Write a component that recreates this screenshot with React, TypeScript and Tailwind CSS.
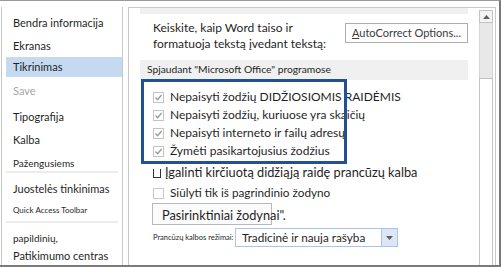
import React from 'react';

const font = { fontFamily: 'Lato, "Noto Sans", "Liberation Sans", sans-serif' };

const CheckMark = () => (
  <svg width="9" height="9" viewBox="0 0 9 9" className="block">
    <path d="M1.5 4.6 L3.6 6.7 L7.6 2" fill="none" stroke="#9b9b9b" strokeWidth="1.4" />
  </svg>
);

const GreyCheck = () => (
  <span className="flex h-[11px] w-[11px] shrink-0 items-center justify-center border border-[#c4c4c4] bg-white">
    <CheckMark />
  </span>
);

const rules = [
  'Nepaisyti žodžių DIDŽIOSIOMIS RAIDĖMIS',
  'Nepaisyti žodžių, kuriuose yra skaičių',
  'Nepaisyti interneto ir failų adresų',
  'Žymėti pasikartojusius žodžius',
];

const Sidebar: React.FC = () => (
  <div className="ml-[1px] flex w-[122px] shrink-0 flex-col whitespace-nowrap border-x border-[#c8c8c8] pt-[5px] text-[11px] leading-[14px] text-[#1f1f1f]">
    <div className="flex h-[22px] items-center pl-[11px]">Bendra informacija</div>
    <div className="flex h-[24px] items-center pl-[11px]">Ekranas</div>
    <div className="ml-[4px] flex h-[20px] items-center bg-[#c5d9f1] pl-[7px]">Tikrinimas</div>
    <div className="flex h-[27px] items-center pl-[11px] text-[#a6a6a6]">Save</div>
    <div className="flex h-[26px] items-center pl-[11px]">Tipografija</div>
    <div className="flex h-[21px] items-center pl-[11px]">Kalba</div>
    <div className="flex h-[21px] items-center pl-[11px] pt-[4px] text-[10px]">Pažengusiems</div>
    <div className="mx-[4px] h-[2px] bg-[#ececec]" />
    <div className="mt-[5px] flex h-[22px] items-center pl-[11px]">Juostelės tinkinimas</div>
    <div className="flex h-[20px] items-center pl-[11px] text-[8px]">Quick Access Toolbar</div>
    <div className="mx-[4px] mt-[2px] h-[2px] bg-[#ececec]" />
    <div className="mt-[6px] flex h-[18px] items-center pl-[11px] text-[10px]">papildinių,</div>
    <div className="flex h-[18px] items-center pl-[11px]">Patikimumo centras</div>
  </div>
);

const ScrollBar: React.FC = () => (
  <div className="mr-[2px] flex w-[14px] shrink-0 flex-col pt-[2px]">
    <div className="flex h-[13px] items-center justify-center border border-[#c4c4c4] bg-[#f4f4f4]">
      <svg width="7" height="4" viewBox="0 0 7 4" className="block">
        <path d="M0 4 L3.5 0 L7 4 Z" fill="#606060" />
      </svg>
    </div>
    <div className="h-[55px] border-x border-[#d6d6d6] bg-[#e8e8e8]" />
    <div className="flex-1 border-x border-t border-[#c4c4c4] bg-white" />
  </div>
);

const Content: React.FC = () => (
  <div className="flex w-[368px] shrink-0 border-x border-t border-[#c8c8c8] text-[#1f1f1f]">
    <div className="flex w-[350px] shrink-0 flex-col whitespace-nowrap">
      <div className="mx-[11px] h-[6px] bg-[#f0f0f0]" />
      <div className="mt-[6px] flex items-start justify-between pl-[24px] pr-[11px]">
        <div className="text-[12px] leading-[16px]">
          <div>Keiskite, kaip Word taiso ir</div>
          <div>formatuoja tekstą įvedant tekstą:</div>
        </div>
        <div className="mt-[3px] flex h-[20px] w-[123px] items-center justify-center border border-[#adadad] bg-[#fdfdfd] text-[11px] text-[#3c3c3c]">
          <span><span className="underline">A</span>utoCorrect Options...</span>
        </div>
      </div>
      <div className="mx-[11px] mt-[8px] flex h-[20px] items-center bg-[#f0f0f0] pl-[7px] text-[10.25px]">
        Spjaudant "Microsoft Office" programose
      </div>
      <div className="mt-[8px] flex flex-col pl-[24px] text-[12px]">
        {rules.map((r) => (
          <div key={r} className="flex h-[18px] items-center gap-[6px]">
            <GreyCheck />
            <span>{r}</span>
          </div>
        ))}
        <div className="mt-[4px] flex h-[18px] items-center text-[12.75px]">
          <span className="mr-[4px] h-[9px] w-[8px] border-x border-b border-[#333]" />
          <span>Įgalinti kirčiuotą didžiąją raidę prancūzų kalba</span>
        </div>
        <div className="mt-[1px] flex h-[20px] items-center gap-[6px] text-[11.75px]">
          <span className="h-[11px] w-[11px] border border-[#c8c8c8] bg-white" />
          <span>Siūlyti tik iš pagrindinio žodyno</span>
        </div>
      </div>
      <div className="ml-[23px] flex h-[22px] w-[120px] items-end border border-[#b9b9b9] bg-[#fbfbfb] pl-[9px] text-[12.75px] leading-[18px]">
        Pasirinktiniai žodynai".
      </div>
      <div className="ml-[24px] mt-[3px] flex items-center">
        <span className="w-[82px] text-[7.5px]">Prancūzų kalbos režimai:</span>
        <div className="flex h-[19px] w-[163px] border border-[#a9c4e8] bg-white">
          <span className="flex flex-1 items-center pl-[6px] text-[11.75px]">Tradicinė ir nauja rašyba</span>
          <span className="flex w-[16px] items-center justify-center border-l border-[#a9c4e8] bg-[#dce7f5]">
            <svg width="7" height="4" viewBox="0 0 7 4" className="block">
              <path d="M0 0 L7 0 L3.5 4 Z" fill="#606060" />
            </svg>
          </span>
        </div>
      </div>
    </div>
    <ScrollBar />
  </div>
);

export default function App() {
  return (
    <div
      style={font}
      className="relative flex h-[267px] w-[501px] gap-[5px] overflow-hidden border-t border-r-2 border-b-2 border-t-[#9a9a9a] border-r-[#7a7a7a] border-b-[#7a7a7a] bg-white pt-[6px]"
    >
      <Sidebar />
      <Content />
      <div className="pointer-events-none absolute left-[141px] top-[78px] h-[85px] w-[206px] border-[3px] border-[#23508f]" />
    </div>
  );
}
